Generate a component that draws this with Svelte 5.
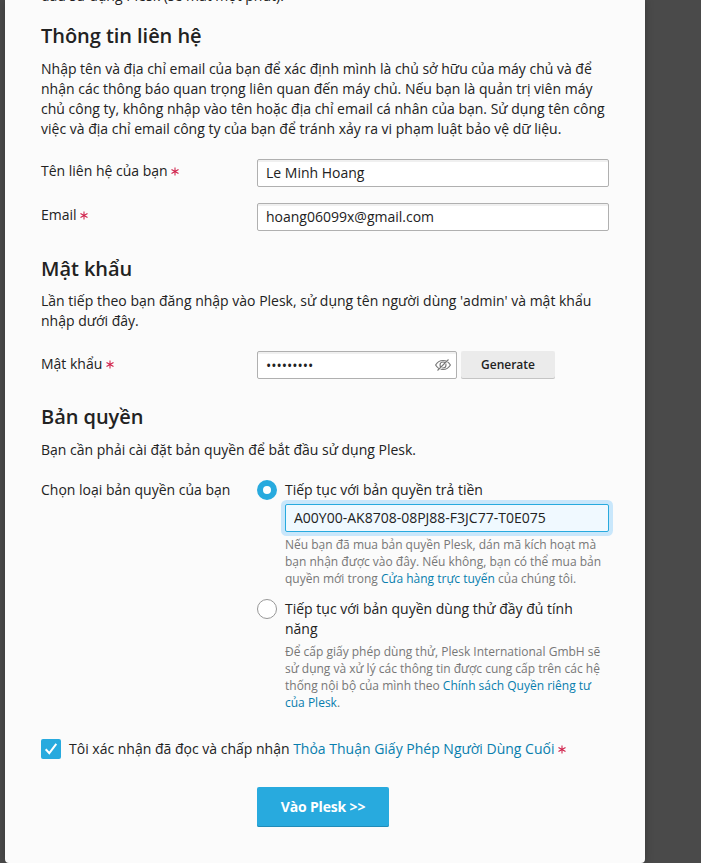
<script>
  const contactLines = [
    'Nhập tên và địa chỉ email của bạn để xác định mình là chủ sở hữu của máy chủ và để',
    'nhận các thông báo quan trọng liên quan đến máy chủ. Nếu bạn là quản trị viên máy',
    'chủ công ty, không nhập vào tên hoặc địa chỉ email cá nhân của bạn. Sử dụng tên công',
    'việc và địa chỉ email công ty của bạn để tránh xảy ra vi phạm luật bảo vệ dữ liệu.'
  ];
  const passwordLines = [
    "Lần tiếp theo bạn đăng nhập vào Plesk, sử dụng tên người dùng 'admin' và mật khẩu",
    'nhập dưới đây.'
  ];
  let name = $state('Le Minh Hoang');
  let email = $state('hoang06099x@gmail.com');
  let password = $state('plesk1234');
  let license = $state('paid');
  let code = $state('A00Y00-AK8708-08PJ88-F3JC77-T0E075');
  let accepted = $state(true);
</script>

{#snippet star()}
  <svg class="star" width="8" height="9" viewBox="0 0 8 9" aria-hidden="true">
    <path d="M4 .5v8M.5 2.5l7 4M7.500 2.500l-7 4" />
  </svg>
{/snippet}

<div class="page">
  <main class="card">
    <p class="intro">đầu sử dụng Plesk (sẽ mất một phút).</p>

    <section class="contact">
      <h2>Thông tin liên hệ</h2>
      <p>{#each contactLines as line}<span class="line">{line}</span>{/each}</p>
      <div class="row">
        <label for="name">Tên liên hệ của bạn {@render star()}</label>
        <input id="name" class="field" bind:value={name} />
      </div>
      <div class="row second">
        <label for="email">Email {@render star()}</label>
        <input id="email" class="field" bind:value={email} />
      </div>
    </section>

    <section class="pass">
      <h2>Mật khẩu</h2>
      <p>{#each passwordLines as line}<span class="line">{line}</span>{/each}</p>
      <div class="row">
        <label for="password">Mật khẩu {@render star()}</label>
        <div class="secret">
          <input id="password" class="field" type="password" bind:value={password} />
          <svg class="eye" width="16" height="16" viewBox="0 0 16 16" aria-hidden="true">
            <path d="M.6 8C2.300 5 5 3.500 8 3.500S13.700 5 15.400 8C13.700 11 11 12.500 8 12.500S2.300 11 .6 8z" />
            <circle cx="8" cy="8" r="3" />
            <path class="gap" d="M3.300 14.200L13.600 2.800" />
            <path d="M2.500 13.500L13.500 2.500" />
          </svg>
        </div>
        <button class="generate" type="button">Generate</button>
      </div>
    </section>

    <section class="license">
      <h2>Bản quyền</h2>
      <p>Bạn cần phải cài đặt bản quyền để bắt đầu sử dụng Plesk.</p>
      <div class="row">
        <span class="label">Chọn loại bản quyền của bạn</span>
        <div class="options">
          <div class="option">
            <input id="paid" type="radio" name="license" value="paid" bind:group={license} />
            <div class="body">
              <label for="paid">Tiếp tục với bản quyền trả tiền</label>
              <input class="field code" bind:value={code} />
              <p class="hint">Nếu bạn đã mua bản quyền Plesk, dán mã kích hoạt mà<br />bạn nhận được vào đây. Nếu không, bạn có thể mua bản<br />quyền mới trong <a href="#store">Cửa hàng trực tuyến</a> của chúng tôi.</p>
            </div>
          </div>
          <div class="option trial">
            <input id="trial" type="radio" name="license" value="trial" bind:group={license} />
            <div class="body">
              <label for="trial">Tiếp tục với bản quyền dùng thử đầy đủ tính<br />năng</label>
              <p class="hint">Để cấp giấy phép dùng thử, Plesk International GmbH sẽ<br />sử dụng và xử lý các thông tin được cung cấp trên các hệ<br />thống nội bộ của mình theo <a href="#privacy">Chính sách Quyền riêng tư<br />của Plesk</a>.</p>
            </div>
          </div>
        </div>
      </div>
    </section>

    <div class="agree">
      <span class="check">
        <input id="agree" type="checkbox" bind:checked={accepted} />
        {#if accepted}
          <svg width="20" height="20" viewBox="0 0 20 20" aria-hidden="true"><path d="M4.700 10.200l3.600 3.900 7-9.300" /></svg>
        {/if}
      </span>
      <label for="agree">Tôi xác nhận đã đọc và chấp nhận <a href="#eula">Thỏa Thuận Giấy Phép Người Dùng Cuối</a> {@render star()}</label>
    </div>

    <button class="submit" type="button">Vào Plesk &gt;&gt;</button>
  </main>
</div>

<style>
  :global(body) { background: #4a4a4a; }
  .page {
    height: 863px;
    overflow: hidden;
    background: #4a4a4a;
    color: #222;
    font: 14px/20px "Open Sans", "Noto Sans", sans-serif;
  }
  .card {
    box-sizing: border-box;
    width: 640px;
    height: 863px;
    margin-left: 5px;
    padding: 0 36px;
    background: #fbfbfb;
    border-radius: 0 0 4px 4px;
    box-shadow: 0 0 8px rgba(0, 0, 0, 0.25);
    white-space: nowrap;
  }
  p, h2 { margin: 0; }
  .line { display: block; }
  .intro { height: 6px; display: flex; align-items: flex-end; }
  h2 { font-size: 20px; line-height: 28px; font-weight: 600; letter-spacing: -0.05px; }
  .contact { padding-top: 16px; }
  .contact h2 { margin-bottom: 9px; }
  .row { display: flex; align-items: flex-start; margin-top: 20px; }
  .row.second { margin-top: 16px; }
  .row > label, .label { width: 216px; flex: none; padding-top: 2px; }
  .pass .row > label { padding-top: 3px; }
  .star { fill: none; stroke: #d0214b; stroke-width: 1.05; }
  .field {
    box-sizing: border-box;
    display: block;
    width: 352px;
    height: 28px;
    padding: 0 8px 2px;
    border: 1px solid #b0b0b0;
    border-radius: 2px;
    background: #fff;
    box-shadow: inset 0 2px 0 #f0f0f0;
    color: #222;
    font: inherit;
    outline: none;
  }
  .pass { padding-top: 24px; }
  .pass h2 { margin-bottom: 8px; }
  .secret { position: relative; width: 200px; margin-right: 4px; }
  .secret .field { width: 200px; padding-bottom: 0; }
  .eye { position: absolute; right: 6px; top: 6px; fill: none; stroke: #777; stroke-width: 1.1; }
  .eye .gap { stroke: #fff; }
  .generate {
    width: 94px;
    height: 28px;
    padding: 0;
    border: 0;
    border-radius: 2px;
    background: #ebebeb;
    box-shadow: inset 0 -1px #c4c4c4;
    color: #222;
    font: 600 12px/28px "Open Sans", sans-serif;
  }
  .license { padding-top: 24px; }
  .license h2 { margin-bottom: 9px; }
  .row > .label { padding-top: 0; }
  .option { display: flex; }
  .option input[type="radio"] {
    appearance: none;
    box-sizing: border-box;
    width: 20px;
    height: 20px;
    margin: 0 8px 0 0;
    border: 1px solid #979797;
    border-radius: 50%;
    background: #fff;
  }
  .option input[type="radio"]:checked { border: 6px solid #28aade; }
  .option label { display: block; }
  .field.code {
    width: 324px;
    margin-top: 4px;
    border-color: #28aade;
    background: #f0f9ff;
    box-shadow: 0 0 0 4px #c9e7fb;
  }
  .hint { margin-top: 4px; color: #777; font-size: 12px; line-height: 17px; }
  .trial { margin-top: 12px; }
  a { color: #087eae; text-decoration: none; }
  .agree { display: flex; margin-top: 28px; }
  .check { position: relative; width: 20px; height: 20px; margin-right: 8px; }
  .check input {
    appearance: none;
    display: block;
    width: 20px;
    height: 20px;
    margin: 0;
    border-radius: 2px;
    background: #28aade;
  }
  .check svg { position: absolute; left: 0; top: 0; fill: none; stroke: #fff; stroke-width: 2; pointer-events: none; }
  .submit {
    display: block;
    width: 132px;
    height: 40px;
    margin: 28px 0 0 216px;
    padding: 0;
    border: 0;
    border-radius: 2px;
    background: #28aade;
    box-shadow: inset 0 -1px #208bb8;
    color: #fff;
    font: 700 14px/40px "Open Sans", sans-serif;
    letter-spacing: -0.16px;
  }
</style>
